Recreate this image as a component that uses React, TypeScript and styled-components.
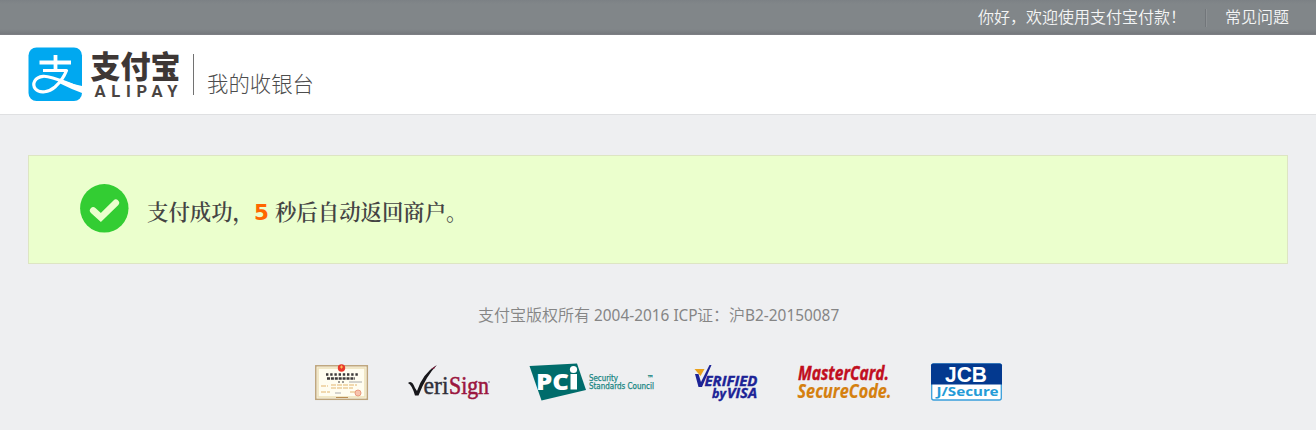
import React from 'react';
import styled, { createGlobalStyle } from 'styled-components';

const cjk = '"Noto Sans CJK SC", sans-serif';

const GlobalStyle = createGlobalStyle`
  * { box-sizing: border-box; }
  body { margin: 0; background: #fff; font-family: "Noto Sans", ${cjk}; }
`;

const Page = styled.div`
  height: 430px;
  background: #eeeff1;
`;

const TopBar = styled.div`
  display: flex;
  justify-content: flex-end;
  height: 35px;
  padding: 0 27px 0 28px;
  background: linear-gradient(#7c8185 0, #818689 4px, #818689 29px, #75787d 34px, #85858b 35px);
  color: #f4f5f5;
  font: 350 16px/32px ${cjk};
`;

const Greeting = styled.span`
  width: 227px;
`;

const TopDivider = styled.i`
  width: 2px;
  height: 18px;
  margin: 9px 18px 0 0;
  border-left: 1px solid #72767a;
  border-right: 1px solid #8d9194;
`;

const Header = styled.header`
  display: flex;
  height: 80px;
  padding-left: 28px;
  background: #fff;
  border-bottom: 1px solid #dfe0e2;
`;

const HeaderDivider = styled.i`
  width: 1px;
  height: 41px;
  margin: 19px 13px 0 8px;
  background: #727272;
`;

const Title = styled.h1`
  margin: 32px 0 0;
  font: 300 21.4px/32px ${cjk};
  color: #4d4d4d;
`;

const Notice = styled.section`
  display: flex;
  height: 109px;
  margin: 40px 28px 0;
  padding: 28px 51px;
  background: #ebffcd;
  border: 1px solid #dde5c3;
`;

const Message = styled.p`
  height: 32px;
  margin: 11px 0 0 18px;
  white-space: pre;
  font: 600 21.4px/32px "Noto Serif CJK SC", ${cjk};
  color: #444;
`;

const Count = styled.strong`
  display: inline-block;
  width: 21px;
  font: 700 21.4px/32px "DejaVu Sans", sans-serif;
  color: #ff6600;
`;

const Copyright = styled.p`
  display: flex;
  height: 24px;
  margin: 38px 0 0 478px;
  white-space: pre;
  font: 350 16px/24px ${cjk};
  color: #858585;
`;

const Latin = styled.span<{ $width: number }>`
  width: ${(p) => p.$width}px;
  font: 400 15.4px/28px "Noto Sans", sans-serif;
`;

const Badges = styled.div`
  display: flex;
  height: 48px;
  margin: 31px 0 0 310px;
`;

const Badge = styled.svg`
  display: block;
  flex: none;
  overflow: visible;
`;

const AlipayLogo = () => (
  <Badge width="157" height="79" viewBox="28 35 157 79">
    <rect x="28.500" y="47.500" width="53.500" height="53.500" rx="8" fill="#00a8f0" />
    <g fill="none" stroke="#fff" strokeLinejoin="round">
      <path d="M39.500 62.500H71M55.500 55V71" strokeWidth="3.800" />
      <path d="M43 70.500H66.500C64 77 60.500 82 55 87C49 92 40 94 35.500 89C31.500 84 35 77 43 76.300C52 75.500 64 82.500 82 89" strokeWidth="3.200" />
    </g>
    <path d="M63 80.500Q72 84 82 86V93Q71 89 59 83Z" fill="#fff" />
    <text x="90.500" y="78" textLength="90" lengthAdjust="spacingAndGlyphs" fontFamily="Noto Sans CJK SC, sans-serif" fontSize="31" fontWeight="900" fill="#3e3735">支付宝</text>
    <text x="94.500" y="97" textLength="83" fontFamily="Roboto, sans-serif" fontWeight="700" fontSize="16.500" fill="#4a4442">ALIPAY</text>
  </Badge>
);

const SuccessIcon = () => (
  <Badge width="49" height="49" viewBox="0 0 49 49">
    <circle cx="24.300" cy="24.300" r="24.200" fill="#33cd33" />
    <path d="M13.200 26.500L20.800 33.500L35.800 18.800" fill="none" stroke="#ebffcd" strokeWidth="6.600" strokeLinecap="round" />
  </Badge>
);

const LicenseBadge = () => (
  <Badge width="93" height="48" viewBox="310 357 93 48">
    <rect x="315.800" y="365.800" width="51.500" height="33.500" fill="#fffdf0" stroke="#bda47b" strokeWidth="1.500" />
    <rect x="318" y="368" width="47" height="29" fill="none" stroke="#ede0b9" strokeWidth="1.500" />
    <circle cx="341.500" cy="368" r="3.700" fill="#e8392c" />
    <path d="M340 367h3M341.500 365.500v3" stroke="#ffbc52" />
    <g fill="none" stroke="#3c3939">
      <path d="M326 374.500h32" strokeWidth="2.600" strokeDasharray="2.400 1.800" />
      <path d="M327 378.500h28" strokeWidth="2.500" strokeDasharray="3 .9" />
      <path d="M338 382h7" strokeWidth="1.200" strokeDasharray="2 2" />
    </g>
    <path d="M349 382h13M335 393h6" stroke="#aaa" />
    <path d="M321 386h7M331 385h26M331 388h22M321 392h9M350 392h7" stroke="#e3b56e" strokeDasharray="5 1" />
    <circle cx="358" cy="393" r="3" fill="#f7c3ac" stroke="#e99a7e" />
    <path d="M336 397.500h12" stroke="#b98d55" />
  </Badge>
);

const VeriSignBadge = () => (
  <Badge width="117" height="48" viewBox="403 357 117 48">
    <path d="M408 383Q412 379.500 415 388L417 391Q423 373 437 365Q426 376 418.500 395.500H415Q412 385 408 383Z" fill="#17171b" />
    <path d="M431 369L436 365.500L434 369Z" fill="#7b2441" />
    <g fontFamily="Liberation Serif, serif" fontSize="25">
      <text x="423.500" y="394" textLength="25" lengthAdjust="spacingAndGlyphs" fill="#303039" stroke="#303039" strokeWidth=".4">eri</text>
      <text x="449" y="394" textLength="40" lengthAdjust="spacingAndGlyphs" fill="#9b1740" stroke="#9b1740" strokeWidth=".6">Sign</text>
    </g>
    <circle cx="489" cy="382" r=".8" fill="#6d6488" />
  </Badge>
);

const PciBadge = () => (
  <Badge width="160" height="48" viewBox="520 357 160 48">
    <path d="M529.500 366L577 363.500L586 390L541.500 400.500Z" fill="#006c6b" />
    <text x="536" y="389.500" textLength="33" lengthAdjust="spacingAndGlyphs" fontFamily="Open Sans, sans-serif" fontWeight="800" fontSize="22" fill="#fff">PC</text>
    <path d="M570.500 374h6.500v15.500h-6.500z" fill="#fff" />
    <circle cx="573.500" cy="369.500" r="3.600" fill="#fff" />
    <g fontFamily="DejaVu Sans, sans-serif" fontSize="8" fill="#168582" stroke="#168582" strokeWidth=".25">
      <text x="589" y="381" textLength="29" lengthAdjust="spacingAndGlyphs">Security</text>
      <text x="589" y="389" textLength="65" lengthAdjust="spacingAndGlyphs">Standards Council</text>
      <text x="647" y="380.500" textLength="7" lengthAdjust="spacingAndGlyphs">™</text>
    </g>
  </Badge>
);

const VisaBadge = () => (
  <Badge width="100" height="48" viewBox="680 357 100 48">
    <path d="M694.500 369L704.500 369L700.500 376Z" fill="#eaa11b" />
    <path d="M695 374H698.500L701 382L709.500 365H711.500L702 387H698.500Z" fill="#1c2396" />
    <g fontFamily="Open Sans, sans-serif" fontWeight="700" fontStyle="italic" fill="#1c2396" stroke="#1c2396" strokeWidth=".35">
      <text x="704.500" y="386" fontSize="14.500" textLength="53" lengthAdjust="spacingAndGlyphs">ERIFIED</text>
      <text x="712" y="397.500" fontSize="13" textLength="14" lengthAdjust="spacingAndGlyphs">by</text>
      <text x="727" y="397.500" fontSize="13.500" textLength="30" lengthAdjust="spacingAndGlyphs">VISA</text>
    </g>
  </Badge>
);

const MasterCardBadge = () => (
  <Badge width="130" height="48" viewBox="780 357 130 48">
    <g fontFamily="Open Sans, sans-serif" fontWeight="700" fontStyle="italic" fontSize="19.500">
      <text x="798" y="379.800" textLength="91" lengthAdjust="spacingAndGlyphs" fill="#c10e20" stroke="#c10e20" strokeWidth=".4">MasterCard.</text>
      <text x="797.500" y="397.500" textLength="94" lengthAdjust="spacingAndGlyphs" fill="#d5800f" stroke="#d5800f" strokeWidth=".2">SecureCode.</text>
    </g>
  </Badge>
);

const JcbBadge = () => (
  <Badge width="110" height="48" viewBox="910 357 110 48">
    <rect x="931.700" y="364" width="69.600" height="36" rx="2" fill="#fff" stroke="#399fdb" strokeWidth="1.300" />
    <path d="M931 384.500V365.500Q931 363.500 933 363.500H1000Q1002 363.500 1002 365.500V384.500Z" fill="#03398f" />
    <text x="945" y="381.800" textLength="42" lengthAdjust="spacingAndGlyphs" fontFamily="Liberation Sans, sans-serif" fontWeight="700" fontSize="21.500" fill="#fff">JCB</text>
    <text x="936.500" y="396.300" textLength="62" lengthAdjust="spacingAndGlyphs" fontFamily="Noto Sans, sans-serif" fontWeight="700" fontSize="13" fill="#249bd7">J/Secure</text>
  </Badge>
);

export default function App() {
  return (
    <>
      <GlobalStyle />
      <Page>
        <TopBar>
          <Greeting>你好，欢迎使用支付宝付款！</Greeting>
          <TopDivider />
          <span>常见问题</span>
        </TopBar>
        <Header>
          <AlipayLogo />
          <HeaderDivider />
          <Title>我的收银台</Title>
        </Header>
        <Notice>
          <SuccessIcon />
          <Message>支付成功，<Count>5</Count>秒后自动返回商户。</Message>
        </Notice>
        <Copyright>
          支付宝版权所有<Latin $width={107}> 2004-2016 ICP</Latin>证：沪<Latin $width={95}>B2-20150087</Latin>
        </Copyright>
        <Badges>
          <LicenseBadge />
          <VeriSignBadge />
          <PciBadge />
          <VisaBadge />
          <MasterCardBadge />
          <JcbBadge />
        </Badges>
      </Page>
    </>
  );
}
